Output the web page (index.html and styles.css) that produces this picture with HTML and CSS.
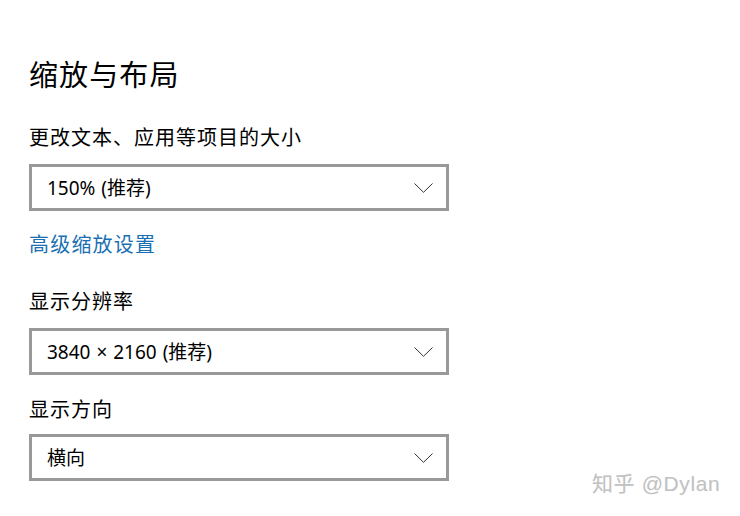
FILE: index.html
```html
<!DOCTYPE html>
<html lang="zh-CN">
<head>
<meta charset="utf-8">
<link rel="stylesheet" href="styles.css">
</head>
<body>
<main class="page">
  <h1 class="title">缩放与布局</h1>
  <div class="label first">更改文本、应用等项目的大小</div>
  <div class="select">
    <span class="value">150% (推荐)</span>
    <svg class="chev" width="19" height="10" viewBox="0 0 19 10"><polyline points="0.5,0.5 9.5,9.3 18.5,0.5" fill="none" stroke="#333" stroke-width="1"/></svg>
  </div>
  <a class="link">高级缩放设置</a>
  <div class="label second">显示分辨率</div>
  <div class="select">
    <span class="value">3840 × 2160 (推荐)</span>
    <svg class="chev" width="19" height="10" viewBox="0 0 19 10"><polyline points="0.5,0.5 9.5,9.3 18.5,0.5" fill="none" stroke="#333" stroke-width="1"/></svg>
  </div>
  <div class="label third">显示方向</div>
  <div class="select">
    <span class="value">横向</span>
    <svg class="chev" width="19" height="10" viewBox="0 0 19 10"><polyline points="0.5,0.5 9.5,9.3 18.5,0.5" fill="none" stroke="#333" stroke-width="1"/></svg>
  </div>
</main>
<div class="watermark">知乎 @Dylan</div>
</body>
</html>
```
FILE: styles.css
```css
html, body {
  margin: 0;
  padding: 0;
  background: #fff;
}
body {
  width: 740px;
  height: 516px;
  position: relative;
  overflow: hidden;
  font-family: "Noto Sans", "Noto Sans CJK SC", sans-serif;
  color: #000;
}
.page {
  display: flex;
  flex-direction: column;
  align-items: flex-start;
  padding: 55px 0 0 29px;
}
.title {
  margin: 0;
  font-size: 29px;
  font-weight: 400;
  line-height: 40px;
  height: 40px;
  letter-spacing: 1.1px;
}
.label {
  font-size: 20px;
  line-height: 30px;
  height: 30px;
  letter-spacing: 1px;
}
.label.first { margin-top: 28px; }
.label.second { margin-top: 27px; }
.label.third { margin-top: 20px; }
.select {
  box-sizing: border-box;
  width: 420px;
  height: 47px;
  border: 3px solid #999;
  margin-top: 11px;
  display: flex;
  align-items: center;
  justify-content: space-between;
  padding: 0 13px 0 15px;
}
.label.third + .select { margin-top: 9px; }
.value {
  font-size: 19px;
  line-height: 26px;
  word-spacing: 1px;
}
.chev {
  display: block;
  margin-top: 1px;
}
.link {
  margin-top: 19px;
  font-size: 20px;
  line-height: 30px;
  height: 30px;
  color: #1a6fb3;
  letter-spacing: 1.2px;
}
.watermark {
  position: absolute;
  left: 592px;
  top: 470px;
  font-size: 21px;
  line-height: 28px;
  color: #c2c2c2;
  letter-spacing: 0.6px;
  text-shadow: 0 0 1px rgba(0,0,0,0.08);
  font-family: "Liberation Sans", "Noto Sans CJK SC", sans-serif;
}
```
